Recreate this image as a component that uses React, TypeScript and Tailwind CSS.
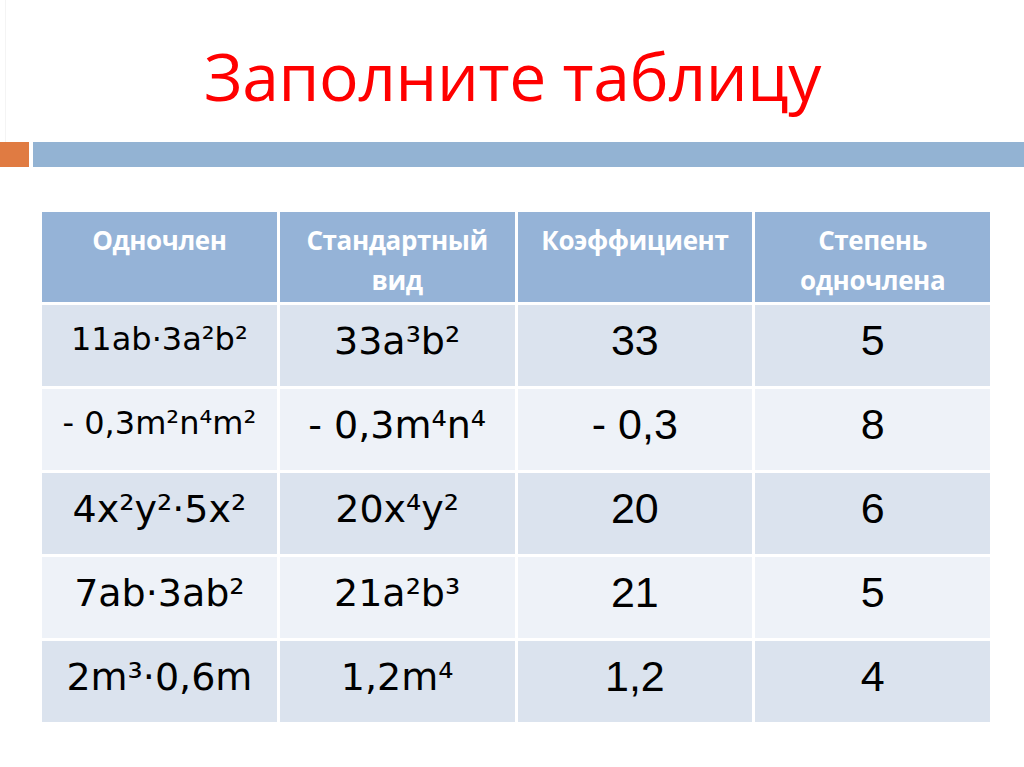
const rows: [string, string, string, string][] = [
  ["11ab·3a²b²", "33a³b²", "33", "5"],
  ["- 0,3m²n⁴m²", "- 0,3m⁴n⁴", "- 0,3", "8"],
  ["4x²y²·5x²", "20x⁴y²", "20", "6"],
  ["7ab·3ab²", "21a²b³", "21", "5"],
  ["2m³·0,6m", "1,2m⁴", "1,2", "4"],
];

export default function App() {
  return (
    <div className="relative w-[1024px] h-[767px] overflow-hidden bg-white">
      {/* заголовок */}
      <div className="ml-[5px] h-[142px] border-l border-[#f4f4f4] pt-[33px] pr-[5px] text-center">
        <h1 className="font-['Open_Sans',sans-serif] text-[66px] leading-[84px] tracking-[-0.4px] text-[#ff0000]">
          Заполните таблицу
        </h1>
      </div>

      {/* полоса */}
      <div className="flex gap-[4px] h-[25px]">
        <div className="w-[29px] bg-[#e07b42]" />
        <div className="flex-1 bg-[#93b3d3]" />
      </div>

      {/* таблица */}
      <div className="ml-[42px] mt-[45px] w-[948px] grid grid-cols-4 gap-[3px] bg-white">
        {["Одночлен", "Стандартный вид", "Коэффициент", "Степень одночлена"].map((h) => (
          <div
            key={h}
            className="h-[90px] bg-[#95b3d7] px-2 pt-[8px] text-center font-['Open_Sans',sans-serif] text-[26px] font-bold leading-[40px] tracking-[-0.4px] text-white"
          >
            {h}
          </div>
        ))}
        {rows.map((r, i) => (
          <div key={i} className="contents">
            {r.map((c, j) => (
              <div
                key={j}
                className={
                  "h-[81px] text-center text-black " +
                  (i % 2 === 0 ? "bg-[#dbe3ee] " : "bg-[#eef2f8] ") +
                  (j < 2
                    ? "font-['DejaVu_Sans',sans-serif] " +
                      (j === 0 && i < 2
                        ? "pt-[12px] text-[32px] leading-[44px]"
                        : "pt-[12px] text-[38px] leading-[48px]")
                    : "font-['Liberation_Sans',sans-serif] pt-[11px] text-[43px] leading-[48px]")
                }
              >
                {c}
              </div>
            ))}
          </div>
        ))}
      </div>
    </div>
  );
}
